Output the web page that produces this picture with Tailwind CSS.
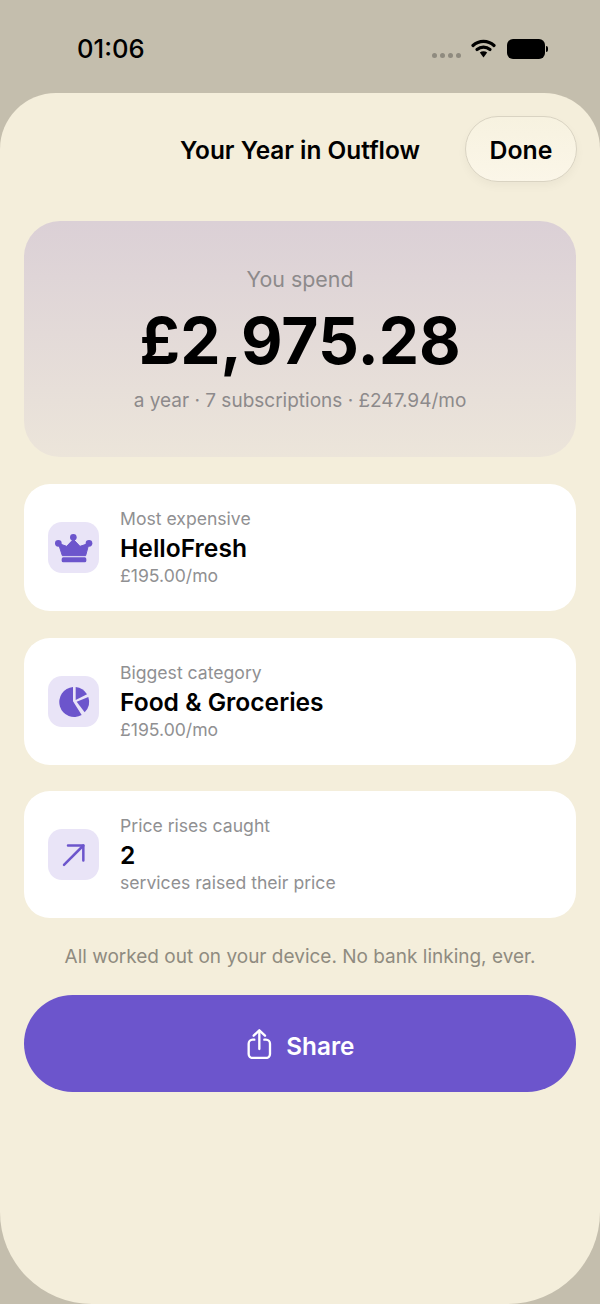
<!doctype html>
<html>
<head>
<meta charset="UTF-8" />
<meta name="viewport" content="width=device-width, initial-scale=1" />
<script src="https://cdn.jsdelivr.net/npm/@tailwindcss/browser@4"></script>
<title>Your Year in Outflow</title>
</head>
<body class="w-[600px] h-[1304px] overflow-hidden bg-[#c4bead] font-['Inter',sans-serif] flex flex-col text-black">
  <!-- status bar -->
  <header class="h-[93px] shrink-0 flex items-start justify-between pt-[33px] pl-[77px] pr-[52px]">
    <span class="text-[25.6px] leading-[31px] font-medium">01:06</span>
    <div class="flex items-center pt-[6px]">
      <div class="flex gap-[3px] mt-[12px] mr-[11px] -ml-[1px]">
        <span class="w-[5px] h-[5px] rounded-full bg-[#8f8b7f]"></span>
        <span class="w-[5px] h-[5px] rounded-full bg-[#8f8b7f]"></span>
        <span class="w-[5px] h-[5px] rounded-full bg-[#8f8b7f]"></span>
        <span class="w-[5px] h-[5px] rounded-full bg-[#8f8b7f]"></span>
      </div>
      <svg class="w-[25px] h-[20px] mr-[11px] -ml-[1px]" viewBox="0 0 25 20" fill="none">
        <path d="M2 6.500C8 1 17 1 23 6.500" stroke="black" stroke-width="3.200" stroke-linecap="round"/>
        <path d="M6 10.500C9.800 7.300 15.200 7.300 19 10.500" stroke="black" stroke-width="3.200" stroke-linecap="round"/>
        <path d="M8.800 13.600L12.500 18.500L16.200 13.600C14 11.900 11 11.900 8.800 13.600Z" fill="black"/>
      </svg>
      <div class="w-[38px] h-[20px] rounded-[6px] bg-black"></div>
      <div class="w-[2px] h-[6px] rounded-r-full bg-black ml-[1px]"></div>
    </div>
  </header>

  <!-- sheet -->
  <main class="flex-1 bg-[#f4eedb] rounded-t-[56px] rounded-b-[92px] px-[24px] flex flex-col">
    <div class="relative h-[128px] shrink-0 flex items-center justify-center">
      <h1 class="text-[24.4px] leading-[30px] font-semibold -mt-[14px]">Your Year in Outflow</h1>
      <button class="absolute right-[-1px] top-[23px] w-[112px] h-[66px] pt-[3px] rounded-full bg-gradient-to-b from-[#f7f2e0] to-[#fbf6e8] border border-[#d9d3c2] shadow-[0_4px_10px_rgba(0,0,0,0.04)] text-[24.8px] font-semibold">Done</button>
    </div>

    <section class="h-[236px] shrink-0 rounded-[36px] bg-gradient-to-b from-[#dbd0d6] to-[#ece5da] flex flex-col items-center pt-[46px]">
      <p class="text-[21.4px] leading-[26px] text-[#8d8a8b] -mt-[1px]">You spend</p>
      <p class="text-[64px] leading-[72px] font-bold mt-[13px]">£2,975.28</p>
      <p class="text-[19px] leading-[24px] text-[#8d8a8b] mt-[12px]">a year · 7 subscriptions · £247.94/mo</p>
    </section>

    <div class="flex flex-col mt-[27px]">
      <article class="h-[127px] rounded-[26px] bg-white flex items-center px-[24px] gap-[21px]">
        <div class="w-[51px] h-[51px] rounded-[14px] bg-[#e9e4f7] flex items-center justify-center">
          <svg class="w-[40px] h-[33.330px]" viewBox="100 120 120 100" fill="#6c55cc">
            <circle cx="158" cy="139" r="10"/><circle cx="113" cy="157" r="10"/><circle cx="205" cy="157" r="10"/>
            <path d="M158 145L178 166L205 157L195 194H125L113 157L138 166Z" stroke="#6c55cc" stroke-width="3" stroke-linejoin="round"/>
            <rect x="123" y="199" width="74" height="15" rx="5"/>
          </svg>
        </div>
        <div class="flex flex-col">
          <p class="text-[17.6px] leading-[22px] text-[#909092]">Most expensive</p>
          <p class="text-[24.6px] leading-[33px] font-semibold mt-[2px]">HelloFresh</p>
          <p class="text-[17.6px] leading-[24px] text-[#909092] -mt-[1px]">£195.00/mo</p>
        </div>
      </article>

      <article class="h-[127px] mt-[27px] rounded-[26px] bg-white flex items-center px-[24px] gap-[21px]">
        <div class="w-[51px] h-[51px] rounded-[14px] bg-[#e9e4f7] flex items-center justify-center">
          <svg class="w-[40px] h-[40px]" viewBox="100 122 120 120" fill="#6c55cc">
            <path d="M157 137A45 45 0 1 0 183 221L157 180Z"/>
            <path d="M165 137.300A45 45 0 0 1 199 159L165 176Z"/>
            <path d="M168 181L203 167A45 45 0 0 1 192 213Z"/>
          </svg>
        </div>
        <div class="flex flex-col">
          <p class="text-[17.6px] leading-[22px] text-[#909092]">Biggest category</p>
          <p class="text-[24.6px] leading-[33px] font-semibold mt-[2px]">Food &amp; Groceries</p>
          <p class="text-[17.6px] leading-[24px] text-[#909092] -mt-[1px]">£195.00/mo</p>
        </div>
      </article>

      <article class="h-[127px] mt-[26px] rounded-[26px] bg-white flex items-center px-[24px] gap-[21px]">
        <div class="w-[51px] h-[51px] rounded-[14px] bg-[#e9e4f7] flex items-center justify-center">
          <svg class="w-[40px] h-[40px]" viewBox="100 133.500 120 120" fill="none" stroke="#6c55cc" stroke-width="7.500" stroke-linecap="round" stroke-linejoin="round">
            <path d="M130 223L188 165"/><path d="M142 165H188V210"/>
          </svg>
        </div>
        <div class="flex flex-col">
          <p class="text-[17.6px] leading-[22px] text-[#909092]">Price rises caught</p>
          <p class="text-[24.6px] leading-[33px] font-semibold mt-[2px]">2</p>
          <p class="text-[17.6px] leading-[24px] text-[#909092] -mt-[1px]">services raised their price</p>
        </div>
      </article>
    </div>

    <p class="text-[19px] leading-[24px] text-[#8f8b80] text-center mt-[27px]">All worked out on your device. No bank linking, ever.</p>

    <button class="mt-[26px] h-[97px] shrink-0 rounded-[48.5px] bg-[#6c55cc] text-white flex items-center justify-center gap-[14px]">
      <svg class="w-[26.670px] h-[31.670px]" viewBox="140 55 80 95" fill="none" stroke="white" stroke-width="7" stroke-linecap="round" stroke-linejoin="round">
        <path d="M165 90H160A12 12 0 0 0 148 102V133A12 12 0 0 0 160 145H200A12 12 0 0 0 212 133V102A12 12 0 0 0 200 90H195"/>
        <path d="M180 118V64"/><path d="M163 78L180 62L197 78"/>
      </svg>
      <span class="text-[24.3px] font-semibold mt-[6px]">Share</span>
    </button>
  </main>
</body>
</html>
